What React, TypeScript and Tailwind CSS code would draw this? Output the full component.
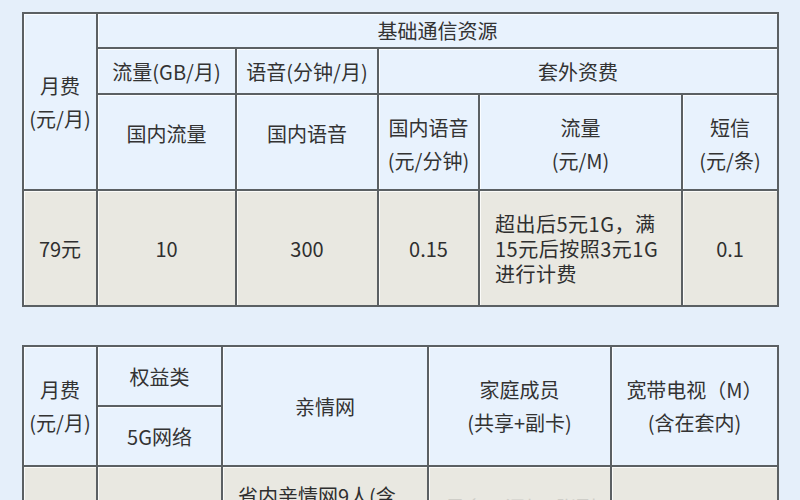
const font = { fontFamily: '"Noto Sans CJK SC", "Noto Sans", sans-serif' };

const th =
  'border-2 border-[#5b6063] bg-[#e8f2fd] text-center align-middle font-normal text-[20px] leading-[33px] text-[#333] shadow-[inset_1px_1px_0_rgba(255,255,255,0.8)]';
const td =
  'border-2 border-[#5b6063] bg-[#e9e8e1] text-center align-middle text-[20px] leading-[25px] text-[#2f2f2f] shadow-[inset_1px_1px_0_rgba(255,255,255,0.8)]';

function PlanTable() {
  return (
    <table className="table-fixed border-collapse w-[755px]">
      <colgroup>
        <col className="w-[74px]" />
        <col className="w-[139px]" />
        <col className="w-[142px]" />
        <col className="w-[101px]" />
        <col className="w-[203px]" />
        <col className="w-[96px]" />
      </colgroup>
      <tbody>
        <tr className="h-[35px]">
          <th rowSpan={3} className={th}>
            月费
            <br />
            (元/月)
          </th>
          <th colSpan={5} className={`${th} leading-[24px]`}>
            基础通信资源
          </th>
        </tr>
        <tr className="h-[46px]">
          <th className={th}>流量(GB/月)</th>
          <th className={th}>语音(分钟/月)</th>
          <th colSpan={3} className={th}>
            套外资费
          </th>
        </tr>
        <tr className="h-[96px]">
          <th className={`${th} !align-top pt-[22px]`}>国内流量</th>
          <th className={`${th} !align-top pt-[22px]`}>国内语音</th>
          <th className={`${th} !align-top pt-[16px]`}>
            国内语音
            <br />
            (元/分钟)
          </th>
          <th className={`${th} !align-top pt-[16px]`}>
            流量
            <br />
            (元/M)
          </th>
          <th className={`${th} !align-top pt-[16px]`}>
            短信
            <br />
            (元/条)
          </th>
        </tr>
        <tr className="h-[116px]">
          <td className={td}>79元</td>
          <td className={td}>10</td>
          <td className={td}>300</td>
          <td className={td}>0.15</td>
          <td className={`${td} !text-left pl-[15px] tracking-[0.5px]`}>
            超出后5元1G，满
            <br />
            15元后按照3元1G
            <br />
            进行计费
          </td>
          <td className={td}>0.1</td>
        </tr>
      </tbody>
    </table>
  );
}

function BenefitTable() {
  return (
    <table className="table-fixed border-collapse w-[755px]">
      <colgroup>
        <col className="w-[74px]" />
        <col className="w-[125px]" />
        <col className="w-[206px]" />
        <col className="w-[183px]" />
        <col className="w-[167px]" />
      </colgroup>
      <tbody>
        <tr className="h-[60px]">
          <th rowSpan={2} className={th}>
            月费
            <br />
            (元/月)
          </th>
          <th className={th}>权益类</th>
          <th rowSpan={2} className={th}>
            亲情网
          </th>
          <th rowSpan={2} className={th}>
            家庭成员
            <br />
            (共享+副卡)
          </th>
          <th rowSpan={2} className={th}>
            宽带电视（M）
            <br />
            (含在套内)
          </th>
        </tr>
        <tr className="h-[60px]">
          <th className={th}>5G网络</th>
        </tr>
        <tr className="h-[120px]">
          <td className={td}></td>
          <td className={td}></td>
          <td className={`${td} !align-top !text-left pt-[16px] pl-[15px]`}>
            省内亲情网9人(含
            <br />
            主卡)
          </td>
          <td className={`${td} !align-top !text-left pt-[28px] pl-[16px] !text-[#cfcec8]`}>
            最多可添加3张副卡
          </td>
          <td className={td}></td>
        </tr>
      </tbody>
    </table>
  );
}

export default function App() {
  return (
    <div className="w-[800px] h-[500px] overflow-hidden bg-[#e5effa]" style={font}>
      <div className="pl-[22px] pt-[12px] flex flex-col gap-[38px]">
        <PlanTable />
        <BenefitTable />
      </div>
    </div>
  );
}
